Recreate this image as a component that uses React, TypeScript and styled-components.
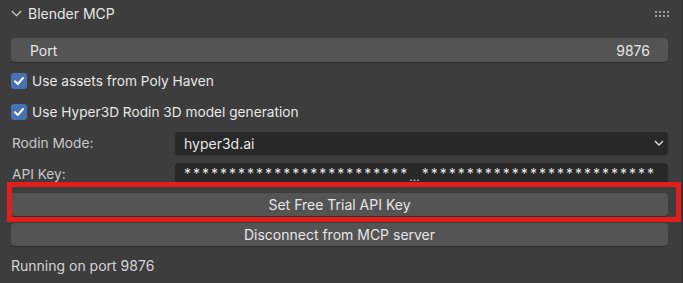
import React from "react";
import styled, { createGlobalStyle } from "styled-components";

const Global = createGlobalStyle`
  html, body { margin: 0; padding: 0; background: #363636; }
  body { font-family: Inter, "Noto Sans", sans-serif; -webkit-font-smoothing: antialiased; }
`;

const Panel = styled.div`
  width: 681px;
  height: 283px;
  box-sizing: border-box;
  background: #3d3d3d;
  padding: 0 13px 0 11px;
  display: flex;
  flex-direction: column;
`;

const Header = styled.div`
  height: 27px;
  margin-bottom: 11px;
  display: flex;
  align-items: center;
  color: #e6e6e6;
  font-size: 14px;
  gap: 6px;
`;

const Grip = styled.div`
  margin-left: auto;
  margin-right: -1px;
  display: grid;
  grid-template-columns: repeat(4, 2px);
  grid-template-rows: repeat(2, 2px);
  gap: 2px 2px;
  & > span { background: #a0a0a0; }
`;

const Body = styled.div`
  display: flex;
  flex-direction: column;
  gap: 7px;
`;

const NumField = styled.div`
  height: 24px;
  box-sizing: border-box;
  border-radius: 4px;
  background: #545454;
  box-shadow: 0 1px 0 #2e2e2e;
  display: flex;
  align-items: center;
  justify-content: space-between;
  padding: 0 18px 0 19px;
  color: #e6e6e6;
  font-size: 14px;
`;

const CheckRow = styled.label`
  height: 24px;
  display: flex;
  align-items: center;
  gap: 5px;
  color: #e6e6e6;
  font-size: 13.7px;
`;

const Box = styled.span`
  width: 16px;
  height: 16px;
  border-radius: 3px;
  background: #4772b3;
  display: flex;
  align-items: center;
  justify-content: center;
`;

const PropRow = styled.div`
  height: 24px;
  display: grid;
  grid-template-columns: 164px 1fr;
  align-items: center;
`;

const Label = styled.span`
  color: #c8c8c8;
  font-size: 13.7px;
  padding-left: 1px;
`;

const DarkField = styled.div<{ $spread?: boolean }>`
  height: 23px;
  box-sizing: border-box;
  border-radius: 4px;
  background: #282828;
  box-shadow: 0 1px 0 #323232;
  display: flex;
  align-items: center;
  justify-content: ${(p) => (p.$spread ? "space-between" : "flex-start")};
  padding: 0 4px 0 9px;
  color: #e6e6e6;
  font-size: 14px;
  overflow: hidden;
  white-space: nowrap;
`;

const Stars = styled.span`
  letter-spacing: 2px;
  font-size: 14px;
  position: relative;
  top: -1px;
`;

const Ellipsis = styled.span`
  letter-spacing: 0;
  font-size: 12px;
  margin: 0 2px 0 0;
  position: relative;
  top: 2px;
  color: #d0d0d0;
`;

const Highlighted = styled.div`
  position: relative;
`;

const RedBox = styled.div`
  position: absolute;
  top: -11px;
  bottom: -6px;
  left: -4px;
  right: -13px;
  border: 5px solid #e31c1c;
  pointer-events: none;
`;

const Button = styled.div`
  height: 23px;
  border-radius: 4px;
  background: #545454;
  box-shadow: 0 1px 0 #2e2e2e;
  display: flex;
  align-items: center;
  justify-content: center;
  color: #e6e6e6;
  font-size: 14px;
`;

const Status = styled.div`
  height: 24px;
  display: flex;
  align-items: center;
  color: #d4d4d4;
  font-size: 14px;
`;

const Check = () => (
  <svg width="12" height="12" viewBox="0 0 12 12">
    <path d="M2 6.3 L4.8 9 L10 3" fill="none" stroke="#fff" strokeWidth="2" strokeLinecap="round" strokeLinejoin="round" />
  </svg>
);

export default function App() {
  return (
    <>
      <Global />
      <Panel>
        <Header>
          <svg width="11" height="7" viewBox="0 0 11 7">
            <path d="M0.8 1 L5.5 5.7 L10.2 1" fill="none" stroke="#cfcfcf" strokeWidth="1.2" />
          </svg>
          <span>Blender MCP</span>
          <Grip>
            {Array.from({ length: 8 }).map((_, i) => <span key={i} />)}
          </Grip>
        </Header>
        <Body>
          <NumField>
            <span>Port</span>
            <span>9876</span>
          </NumField>
          <CheckRow>
            <Box><Check /></Box>
            Use assets from Poly Haven
          </CheckRow>
          <CheckRow>
            <Box><Check /></Box>
            Use Hyper3D Rodin 3D model generation
          </CheckRow>
          <PropRow>
            <Label>Rodin Mode:</Label>
            <DarkField $spread>
              <span>hyper3d.ai</span>
              <svg width="10" height="8" viewBox="0 0 10 8">
                <path d="M1 2 L5 6 L9 2" fill="none" stroke="#e0e0e0" strokeWidth="1.4" />
              </svg>
            </DarkField>
          </PropRow>
          <PropRow>
            <Label>API Key:</Label>
            <DarkField>
              <Stars>*************************</Stars>
              <Ellipsis>...</Ellipsis>
              <Stars>**************************</Stars>
            </DarkField>
          </PropRow>
          <Highlighted>
            <Button>Set Free Trial API Key</Button>
            <RedBox />
          </Highlighted>
          <Button>Disconnect from MCP server</Button>
          <Status>Running on port 9876</Status>
        </Body>
      </Panel>
    </>
  );
}
